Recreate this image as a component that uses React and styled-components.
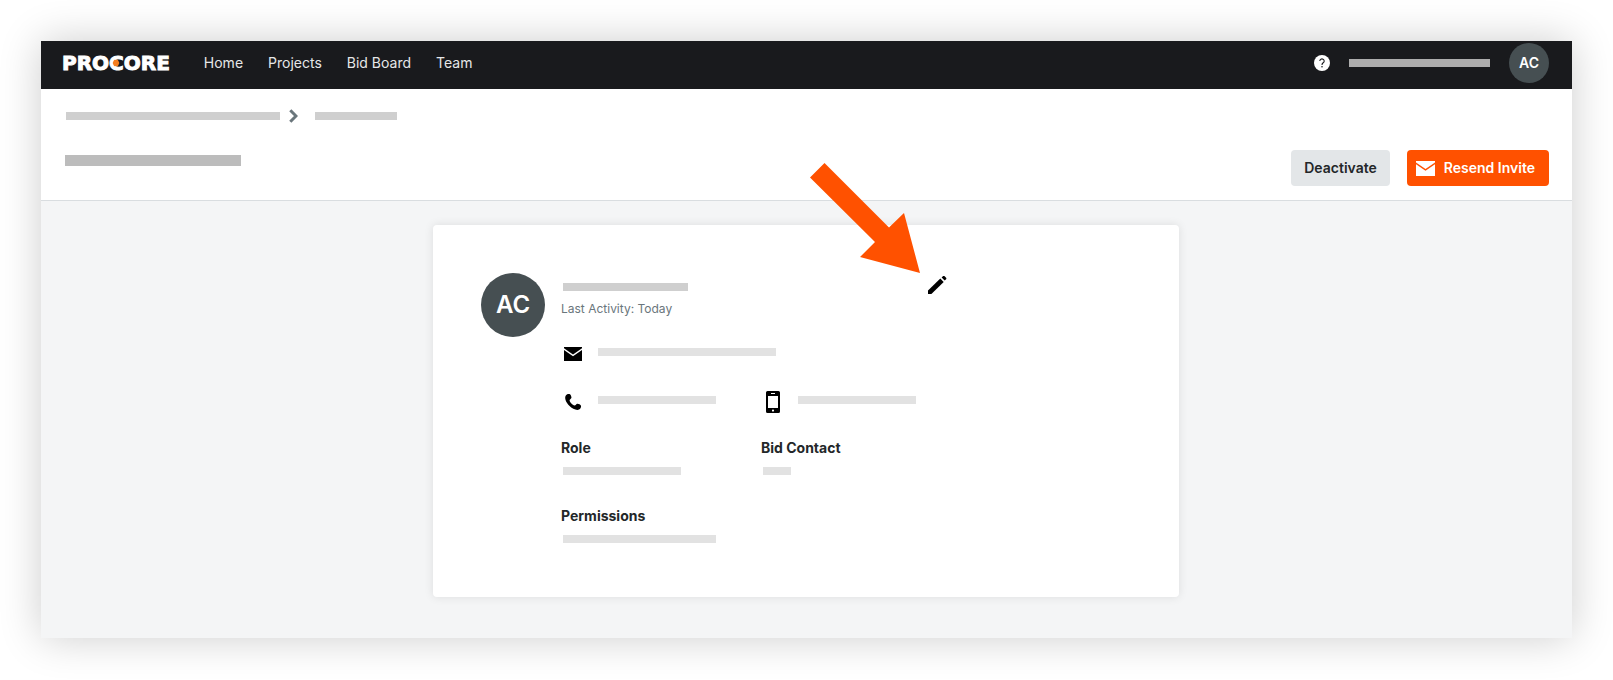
import React from "react";
import styled, { createGlobalStyle } from "styled-components";

const GlobalStyle = createGlobalStyle`
  *, *::before, *::after { box-sizing: border-box; }
  body {
    margin: 0;
    background: #fff;
    color: #232729;
    font-family: Inter, "Liberation Sans", sans-serif;
    font-size: 14px;
    line-height: 20px;
  }
`;

const Page = styled.div`
  padding: 41px;
`;

const Frame = styled.div`
  background: #f4f5f6;
  box-shadow: 0 0 40px rgba(0, 0, 0, 0.2);
`;

const NavBar = styled.header`
  display: flex;
  align-items: center;
  justify-content: space-between;
  height: 48px;
  padding: 0 23px 4px 21px;
  background: #191a1d;
`;

const NavGroup = styled.div`
  display: flex;
  align-items: center;
`;

const Logo = styled.a`
  position: relative;
  margin-right: 34px;
  color: #fff;
  font: 700 20px/20px "DejaVu Sans", sans-serif;
  -webkit-text-stroke: 1px #fff;
  text-decoration: none;
`;

const LogoMark = styled.svg`
  position: absolute;
  top: 50%;
  left: 50%;
  transform: translate(-50%, -50%);
`;

const NavLinks = styled.nav`
  display: flex;
  gap: 25px;
`;

const NavLink = styled.a`
  color: #e6e7e8;
  text-decoration: none;
`;

const IconButton = styled.button`
  display: flex;
  padding: 0;
  border: 0;
  background: none;
  color: #000;
`;

const Placeholder = styled.span`
  display: block;
  width: ${(p) => p.$width}px;
  height: ${(p) => p.$height || 8}px;
  background: ${(p) => p.$color || "#e2e2e2"};
`;

const Avatar = styled.div`
  display: flex;
  flex: none;
  align-items: center;
  justify-content: center;
  width: ${(p) => p.$size}px;
  height: ${(p) => p.$size}px;
  border-radius: 50%;
  background: #464f52;
  color: #fff;
  font-size: ${(p) => (p.$size > 40 ? 24 : 14)}px;
  font-weight: 600;
`;

const UserArea = styled(NavGroup)`
  gap: 19px;
`;

const PageHeader = styled.section`
  padding: 20px 23px 14px 24px;
  border-bottom: 1px solid #d9dde0;
  background: #fff;
`;

const Breadcrumbs = styled.nav`
  display: flex;
  align-items: center;
  height: 14px;
  padding-left: 1px;
`;

const Chevron = styled.svg`
  margin: 0 17px 0 9px;
`;

const TitleRow = styled.div`
  display: flex;
  align-items: flex-start;
  justify-content: space-between;
  margin-top: 27px;
`;

const Title = styled.div`
  padding-top: 5px;
`;

const Actions = styled.div`
  display: flex;
  gap: 17px;
`;

const Button = styled.button`
  display: flex;
  align-items: center;
  gap: 9px;
  height: 36px;
  padding: ${(p) => (p.$primary ? "0 14px 0 9px" : "0 13px")};
  border: 0;
  border-radius: 4px;
  background: ${(p) => (p.$primary ? "#ff5100" : "#e3e6e8")};
  color: ${(p) => (p.$primary ? "#fff" : "#232729")};
  font: 600 14px/20px Inter, "Liberation Sans", sans-serif;
`;

const Content = styled.main`
  padding: 24px 25px 41px 24px;
`;

const Card = styled.article`
  display: flex;
  gap: 16px;
  max-width: 746px;
  margin: 0 auto;
  padding: 48px 48px 54px;
  border-radius: 4px;
  background: #fff;
  box-shadow: 0 0 10px rgba(0, 0, 0, 0.1);
`;

const Details = styled.div`
  flex: 1;
`;

const Identity = styled.div`
  display: flex;
  align-items: flex-start;
  justify-content: space-between;
  width: 388px;
  height: 69px;
`;

const Name = styled.div`
  padding: 10px 0 0 2px;
`;

const Activity = styled.p`
  margin: 10px 0 0;
  color: #6a767c;
  font-size: 12px;
  line-height: 16px;
`;

const EditAnchor = styled.div`
  position: relative;
`;

const Pointer = styled.svg`
  position: absolute;
  right: 29px;
  bottom: 24px;
  pointer-events: none;
`;

const Columns = styled.div`
  display: grid;
  grid-template-columns: 200px 200px;
  margin-top: ${(p) => p.$top || 0}px;
`;

const ContactItem = styled.div`
  display: flex;
  align-items: center;
  gap: 13px;
  height: 24px;
  color: #000;

  ${Placeholder} { margin-bottom: 4px; }
`;

const Field = styled.section`
  ${Placeholder} { margin: 9px 0 0 2px; }
`;

const FieldLabel = styled.h2`
  margin: 0;
  font-size: 14px;
  font-weight: 700;
  line-height: 20px;
`;

const MailIcon = () => (
  <svg width="19" height="19" viewBox="3 3 18 18" fill="currentColor" aria-hidden="true">
    <path d="M3 5h18v1.2l-9 6.2-9-6.2z" />
    <path d="M3 8l9 6.2L21 8v11H3z" />
  </svg>
);

const ContactMailIcon = () => (
  <svg width="24" height="24" viewBox="0 0 24 24" fill="currentColor" aria-hidden="true">
    <path d="M3 5h18v1.3l-9 6.200-9-6.200z" />
    <path d="M3 8l9 6.200 9-6.200V19H3z" />
  </svg>
);

const PhoneIcon = () => (
  <svg width="24" height="24" viewBox="0 0 24 24" fill="currentColor" aria-hidden="true">
    <path d="M5 5.200C6 4 8 3.500 9 4.300C10 5.200 10.700 7.200 10.400 8C10.100 8.900 8.500 9.400 8.600 10.500C8.800 12.400 11.600 15.200 13.500 15.500C14.600 15.600 15.300 14 16.200 13.800C17.300 13.600 19.600 14.700 20 15.700C20.400 17 19.300 19 18 19.600C15.500 20.700 11.300 18.800 8.300 15.800C5 12.400 3 7.800 5 5.200z" />
  </svg>
);

const MobileIcon = () => (
  <svg width="24" height="24" viewBox="0 0 24 24" fill="currentColor" aria-hidden="true">
    <path
      fillRule="evenodd"
      d="M6.500 1h11A1.500 1.500 0 0 1 19 2.500v19a1.500 1.500 0 0 1-1.500 1.500h-11A1.500 1.500 0 0 1 5 21.500v-19A1.500 1.500 0 0 1 6.500 1zM7 6v12h10V6zM10 3v1h4V3zM12 19.500a1.100 1.100 0 1 0 0 2.200 1.100 1.100 0 0 0 0-2.200z"
    />
  </svg>
);

const PencilIcon = () => (
  <svg width="24" height="24" viewBox="0 0 24 24" fill="currentColor" aria-hidden="true">
    <path d="M3 17.600L15.300 5.500L18.700 8.900L6.400 21H3z" />
    <path d="M16.600 4.500L18.100 3H19.400L21.300 4.900V6L19.700 7.500z" />
  </svg>
);

const HelpIcon = () => (
  <svg width="16" height="16" viewBox="0 0 16 16" aria-hidden="true">
    <circle cx="8" cy="8" r="8" fill="#fff" />
    <path d="M5.800 6a2.200 2.100 0 1 1 3.400 1.800C8.300 8.400 8 8.800 8 9.900" fill="none" stroke="#191a1d" strokeWidth="1.100" />
    <circle cx="8" cy="11.800" r="0.800" fill="#191a1d" />
  </svg>
);

const links = ["Home", "Projects", "Bid Board", "Team"];

export default function App() {
  return (
    <Page>
      <GlobalStyle />
      <Frame>
        <NavBar>
          <NavGroup>
            <Logo href="#">
              PROCORE
              <LogoMark width="7" height="7" viewBox="0 0 6 6" aria-hidden="true">
                <path d="M1.500 0.300h3L6 3L4.500 5.700h-3L0 3z" fill="#f47e20" />
              </LogoMark>
            </Logo>
            <NavLinks>
              {links.map((label) => (
                <NavLink key={label} href="#">{label}</NavLink>
              ))}
            </NavLinks>
          </NavGroup>
          <UserArea>
            <IconButton aria-label="Help"><HelpIcon /></IconButton>
            <Placeholder $width={141} $color="#adadad" />
            <Avatar $size={40}>AC</Avatar>
          </UserArea>
        </NavBar>

        <PageHeader>
          <Breadcrumbs aria-label="Breadcrumb">
            <Placeholder $width={214} $color="#cfcfcf" />
            <Chevron width="9" height="14" viewBox="0 0 9 14" aria-hidden="true">
              <path d="M1.300 1.200l5.700 5.800-5.700 5.800" fill="none" stroke="#6a767c" strokeWidth="3" />
            </Chevron>
            <Placeholder $width={82} $color="#cfcfcf" />
          </Breadcrumbs>
          <TitleRow>
            <Title><Placeholder $width={176} $height={11} $color="#bcbcbc" /></Title>
            <Actions>
              <Button>Deactivate</Button>
              <Button $primary><MailIcon />Resend Invite</Button>
            </Actions>
          </TitleRow>
        </PageHeader>

        <Content>
          <Card>
            <Avatar $size={64}>AC</Avatar>
            <Details>
              <Identity>
                <div>
                  <Name><Placeholder $width={125} $color="#cfcfcf" /></Name>
                  <Activity>Last Activity: Today</Activity>
                </div>
                <EditAnchor>
                  <IconButton aria-label="Edit"><PencilIcon /></IconButton>
                  <Pointer width="110" height="110" viewBox="0 0 110 110" aria-hidden="true">
                    <path d="M14.500 0L79 64.500L94 50L110 110L50 94L65 79L0 14.500z" fill="#ff5100" />
                  </Pointer>
                </EditAnchor>
              </Identity>
              <ContactItem><ContactMailIcon /><Placeholder $width={178} /></ContactItem>
              <Columns $top={24}>
                <ContactItem><PhoneIcon /><Placeholder $width={118} /></ContactItem>
                <ContactItem><MobileIcon /><Placeholder $width={118} /></ContactItem>
              </Columns>
              <Columns $top={24}>
                <Field><FieldLabel>Role</FieldLabel><Placeholder $width={118} /></Field>
                <Field><FieldLabel>Bid Contact</FieldLabel><Placeholder $width={28} /></Field>
              </Columns>
              <Columns $top={31}>
                <Field><FieldLabel>Permissions</FieldLabel><Placeholder $width={153} /></Field>
              </Columns>
            </Details>
          </Card>
        </Content>
      </Frame>
    </Page>
  );
}
